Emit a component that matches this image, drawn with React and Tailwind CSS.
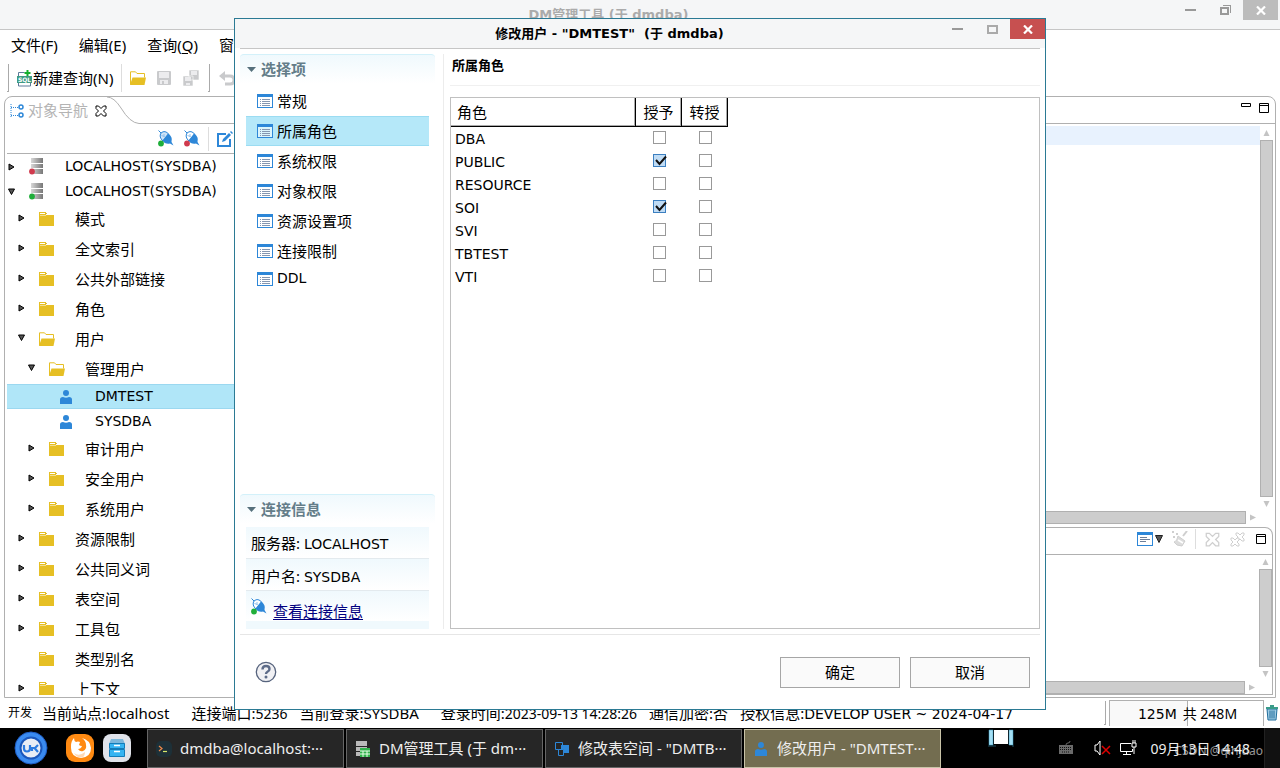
import { useState } from "react";

const treeRows = [
  { level: 0, kind: 'server', dot: '#d03a4d', arrow: 'right', text: 'LOCALHOST(SYSDBA)' },
  { level: 0, kind: 'server', dot: '#1fae3a', arrow: 'down', text: 'LOCALHOST(SYSDBA)' },
  { level: 1, kind: 'folder', arrow: 'right', text: '模式' },
  { level: 1, kind: 'folder', arrow: 'right', text: '全文索引' },
  { level: 1, kind: 'folder', arrow: 'right', text: '公共外部链接' },
  { level: 1, kind: 'folder', arrow: 'right', text: '角色' },
  { level: 1, kind: 'open', arrow: 'down', text: '用户' },
  { level: 2, kind: 'open', arrow: 'down', text: '管理用户' },
  { level: 3, kind: 'user', text: 'DMTEST', selected: true },
  { level: 3, kind: 'user', text: 'SYSDBA' },
  { level: 2, kind: 'folder', arrow: 'right', text: '审计用户' },
  { level: 2, kind: 'folder', arrow: 'right', text: '安全用户' },
  { level: 2, kind: 'folder', arrow: 'right', text: '系统用户' },
  { level: 1, kind: 'folder', arrow: 'right', text: '资源限制' },
  { level: 1, kind: 'folder', arrow: 'right', text: '公共同义词' },
  { level: 1, kind: 'folder', arrow: 'right', text: '表空间' },
  { level: 1, kind: 'folder', arrow: 'right', text: '工具包' },
  { level: 1, kind: 'folder', text: '类型别名' },
  { level: 1, kind: 'folder', arrow: 'right', text: '上下文' },
];

const levelPadding = ['pl-0', 'pl-[10px]', 'pl-[20px]', 'pl-[30px]'];

const pages = ['常规', '所属角色', '系统权限', '对象权限', '资源设置项', '连接限制', 'DDL'];

const initialRoles = [
  { name: 'DBA', granted: false, admin: false },
  { name: 'PUBLIC', granted: true, admin: false },
  { name: 'RESOURCE', granted: false, admin: false },
  { name: 'SOI', granted: true, admin: false },
  { name: 'SVI', granted: false, admin: false },
  { name: 'TBTEST', granted: false, admin: false },
  { name: 'VTI', granted: false, admin: false },
];

const isLatin = (text) => /^[\x20-\x7e]+$/.test(text);

/* ---------- icons ---------- */

const FolderIcon = () => (
  <svg width="15" height="14" viewBox="0 0 15 14" shapeRendering="crispEdges">
    <path d="M0 0h7v1h1v1h7v12H0z" fill="#e6bf24" />
    <path d="M1 1h5v1H1zM7 2h8v1H7z" fill="#fff" />
    <path d="M1 3h6v1H1z" fill="#f3df91" />
  </svg>
);

const OpenFolderIcon = () => (
  <svg width="17" height="15" viewBox="0 0 17 15">
    <path d="M.5 13.5V.8h5l1.500 1.700h7.500v4" fill="#fff" stroke="#e6bf24" />
    <path d="M2.500 6.500H16l-1.500 7.500H0z" fill="#e6bf24" />
  </svg>
);

const ServerIcon = ({ dot }) => (
  <svg width="16" height="17" viewBox="0 0 16 17">
    <defs>
      <linearGradient id="bar">
        <stop offset="0" stopColor="#d8d8d8" />
        <stop offset="1" stopColor="#777" />
      </linearGradient>
    </defs>
    <path d="M2 0h12v5H2zM2 6h12v4H2zM2 11h12v5H2z" fill="url(#bar)" />
    <circle cx="3" cy="13.500" r="2.900" fill={dot} />
  </svg>
);

const UserIcon = ({ size = 14 }) => (
  <svg width={size} height={size} viewBox="0 0 14 14">
    <circle cx="7" cy="3" r="3" fill="#2d87d8" />
    <path d="M1 14V9.500Q1 7 4 7q3 1.500 6 0 3 0 3 2.500V14z" fill="#2d87d8" />
  </svg>
);

const PlugIcon = ({ dot, solid }) => (
  <svg width="16" height="17" viewBox="0 0 16 17">
    <path d="M.5.5l3 3" stroke="#2d87d8" />
    <path d="M3 3q4-3.500 8 1.500L5 11Q.5 7 3 3z" fill={solid ? '#cfe4f7' : '#fff'} stroke="#2d87d8" />
    <path d="M6 4v3M3.500 5.500l3 1" stroke="#8fc0ec" />
    <path d="M10 3.500q5 3 3.500 8.500l2 3.500-3.500-2q-5 1-7.500-3z" fill="#2d87d8" />
    <circle cx="3" cy="13.500" r="2.900" fill={dot} />
  </svg>
);

const PageIcon = () => (
  <svg width="16" height="14" viewBox="0 0 16 14" shapeRendering="crispEdges">
    <path d="M.5.5h15v13H.5z" fill="#fff" fillOpacity=".5" stroke="#2d87d8" />
    <path d="M0 0h16v3H0z" fill="#2d87d8" />
    <path d="M3 5h1M3 7h1M3 9h1M3 11h1M5 5h8M5 7h8M5 9h8M5 11h8" transform="translate(0 .5)" stroke="#8496b0" />
  </svg>
);

const SqlIcon = () => (
  <svg width="16" height="17" viewBox="0 0 16 17">
    <path d="M1.500 6V2.500h6M1.500 13v3h12v-3" fill="none" stroke="#5d7a99" />
    <rect y="6" width="15" height="7" fill="#3f9b84" />
    <text x="7.500" y="12" fontSize="6" fontWeight="700" fontFamily="DejaVu Sans" textAnchor="middle" fill="#fff">SQL</text>
    <path d="M10.500 0v6M7.500 3h6" stroke="#14b02c" strokeWidth="2" />
  </svg>
);

const SaveIcon = ({ size = 14 }) => (
  <svg width={size} height={size} viewBox="0 0 14 14">
    <path d="M0 1q0-1 1-1h12q1 0 1 1v12q0 1-1 1H1q-1 0-1-1z" fill="#c9cacc" />
    <path d="M2 1h10v6H2zM3 9h8v4H3z" fill="#ececee" />
    <path d="M5 10h2v3H5z" fill="#c9cacc" />
  </svg>
);

const SaveAllIcon = () => (
  <svg width="16" height="16" viewBox="0 0 16 16">
    <path d="M6 0h10v10H6zM0 6h10v10H0z" fill="#c9cacc" stroke="#fff" strokeWidth=".6" />
    <path d="M8 1h6v4H8zM2 7h6v4H2zM3 13h4v2H3z" fill="#ececee" />
  </svg>
);

const UndoIcon = () => (
  <svg width="17" height="15" viewBox="0 0 17 15">
    <path d="M3 5h8q4 0 4 4t-4 4H6" fill="none" stroke="#c9cacc" strokeWidth="3" />
    <path d="M0 5l6-5v10z" fill="#c9cacc" />
  </svg>
);

const NavIcon = () => (
  <svg width="14" height="16" viewBox="0 0 14 16">
    <path d="M1 1v13M1 4.500h7M1 12.500h7" stroke="#2d87d8" strokeDasharray="1 1" fill="none" />
    <circle cx="11" cy="4" r="2" fill="#fff" stroke="#2d87d8" strokeWidth="1.500" />
    <circle cx="11" cy="12" r="2" fill="#fff" stroke="#2d87d8" strokeWidth="1.500" />
  </svg>
);

const CrossOutline = ({ color = '#000', size = 12 }) => (
  <svg width={size} height={size} viewBox="0 0 12 12">
    <path d="M1 1h2.500L6 3.500 8.500 1H11v2.500L8.500 6 11 8.500V11H8.500L6 8.500 3.500 11H1V8.500L3.500 6 1 3.500z" fill="#fff" stroke={color} />
  </svg>
);

const EditIcon = () => (
  <svg width="16" height="16" viewBox="0 0 16 16">
    <path d="M9 3H1v12h12V8" fill="none" stroke="#2d87d8" strokeWidth="2" />
    <path d="M5 11l1-3 6-6 2 2-6 6zM13 1l1-1 2 2-1 1z" fill="#2d87d8" />
  </svg>
);

const TreeArrow = ({ dir }) => (
  <svg width="9" height="8" viewBox="0 0 9 8">
    {dir === 'right' && <path d="M2 1v6l5-3z" fill="#555" stroke="#000" />}
    {dir === 'down' && <path d="M1.500 1h6l-3 5.500z" fill="#555" stroke="#000" />}
  </svg>
);

const MinimizeBox = () => (
  <svg width="10" height="10" viewBox="0 0 10 10"><path d="M.5.5h9v3h-9z" fill="#fff" stroke="#000" /></svg>
);

const MaximizeBox = () => (
  <svg width="10" height="10" viewBox="0 0 10 10"><path d="M.5.5h9v9h-9zM0 2.500h10" fill="#fff" stroke="#000" /></svg>
);

const ConsoleIcon = () => (
  <svg width="16" height="14" viewBox="0 0 16 14" shapeRendering="crispEdges">
    <path d="M.5.5h15v13H.5z" fill="#fff" stroke="#2d87d8" />
    <path d="M0 0h16v3H0z" fill="#2d87d8" />
    <path d="M3 5.500h7M3 7.500h10M3 9.500h6" stroke="#6d7f99" />
  </svg>
);

const BroomIcon = () => (
  <svg width="17" height="16" viewBox="0 0 17 16">
    <path d="M16 0l-4 5" stroke="#cfcfcf" strokeWidth="2" />
    <path d="M7 5l7 5-3 5q-6 0-8-4 3 0 4-6z" fill="#dcdcdc" stroke="#cfcfcf" />
    <path d="M7 9l5 3" stroke="#fff" strokeWidth="1.500" />
    <path d="M1 0h2v2H1zM5 2h2v2H5zM2 5h2v2H2z" fill="#cfcfcf" />
  </svg>
);

const RemoveAllIcon = () => (
  <svg width="16" height="15" viewBox="0 0 16 15">
    <path d="M6 1h2l2 2 2-2h2v2l-2 2 2 2v2h-2l-2-2-2 2H6V7l2-2-2-2z" fill="#fff" stroke="#cfcfcf" />
    <path d="M1 6h2l2 2 2-2h2v2l-2 2 2 2v2H7l-2-2-2 2H1v-2l2-2-2-2z" fill="#fff" stroke="#cfcfcf" />
  </svg>
);

const TrashIcon = () => (
  <svg width="12" height="16" viewBox="0 0 12 16">
    <path d="M1 4h10l-1 11H2z" fill="#9fcbe3" stroke="#1f6d9c" />
    <path d="M4 5.500v8M6 5.500v8M8 5.500v8" stroke="#1f6d9c" />
    <path d="M0 2h12v2H0zM4 0h4v2H4z" fill="#3a9c8a" />
  </svg>
);

/* ---------- shared parts ---------- */

const WindowBar = ({ title, active }) => (
  <header className="flex h-[29px] shrink-0 bg-[#f5f6f7]">
    <h1 className={`flex-1 whitespace-pre pl-[44px] text-center font-["DejaVu_Sans","Noto_Sans_CJK_SC",sans-serif] text-[13px] font-bold leading-[30px] ${active ? 'text-black' : 'text-[#ababab]'}`}>
      {title}
    </h1>
    <button aria-label="最小化" className="flex h-5 w-[35px] items-center justify-center">
      <span className="h-[2px] w-[11px] bg-[#999]" />
    </button>
    <button aria-label="最大化" className="flex h-5 w-[35px] items-center justify-center">
      {active ? (
        <span className="h-[9px] w-[11px] border-2 border-[#aaa]" />
      ) : (
        <svg width="11" height="10" viewBox="0 0 11 10" shapeRendering="crispEdges">
          <path d="M1 3h7v6H1z" fill="none" stroke="#999" strokeWidth="2" />
          <path d="M3 .5h7.500V8" fill="none" stroke="#999" />
        </svg>
      )}
    </button>
    <button aria-label="关闭" className={`flex h-5 w-[35px] items-center justify-center ${active ? 'bg-[#c75050]' : 'bg-[#bcbcbc]'}`}>
      <svg width="10" height="9" viewBox="0 0 10 9">
        <path d="M1 .5l8 8M9 .5l-8 8" stroke="#fff" strokeWidth="2.200" />
      </svg>
    </button>
  </header>
);

const VScroll = () => (
  <div className="flex w-[13px] shrink-0 flex-col items-center">
    <svg width="7" height="14" viewBox="0 0 7 14"><path d="M.5 10l3-6 3 6z" fill="#c4c4c4" /></svg>
    <div className="w-full flex-1 border border-[#b0b0b0] bg-[#cdcdcd]" />
    <svg width="7" height="14" viewBox="0 0 7 14"><path d="M.5 4l3 6 3-6z" fill="#c4c4c4" /></svg>
  </div>
);

const HScroll = () => (
  <div className="flex h-[13px] shrink-0 items-center pr-[13px]">
    <div className="h-full flex-1 border border-[#b0b0b0] bg-[#cdcdcd]" />
    <svg width="14" height="7" viewBox="0 0 14 7"><path d="M4 .5l6 3-6 3z" fill="#c4c4c4" /></svg>
  </div>
);

const CheckBox = ({ label, checked, onChange }) => (
  <span className="relative mx-auto block size-[13px]">
    <input
      type="checkbox"
      aria-label={label}
      checked={checked}
      onChange={onChange}
      className="block size-[13px] appearance-none border border-[#999] bg-white checked:border-[#3c7fc0] checked:bg-[#c0dcf5]"
    />
    {checked && (
      <svg className="pointer-events-none absolute left-px top-0" width="13" height="13" viewBox="0 0 13 13">
        <path d="M2 6l3.500 4L12 2.500" fill="none" stroke="#111" strokeWidth="2" />
      </svg>
    )}
  </span>
);

/* ---------- main window ---------- */

const MenuBar = () => (
  <nav className="flex h-[30px] shrink-0 items-center gap-[21px] pl-[11px] leading-[30px]">
    <button>文件(F)</button>
    <button>编辑(E)</button>
    <button>查询(<span className="underline underline-offset-2">Q</span>)</button>
    <button>窗口(W)</button>
  </nav>
);

const ToolBar = () => (
  <div className="flex h-[36px] shrink-0 items-center pl-[7px]">
    <span className="mr-2 h-7 w-[2px] border-b border-r border-[#aaa]" />
    <button className="flex items-center"><SqlIcon />新建查询(N)</button>
    <span className="mx-2 h-7 w-px bg-[#ddd]" />
    <button aria-label="打开"><OpenFolderIcon /></button>
    <button aria-label="保存" className="ml-[10px]"><SaveIcon /></button>
    <button aria-label="全部保存" className="ml-3"><SaveAllIcon /></button>
    <span className="mx-[9px] h-7 w-[2px] border-b border-r border-[#aaa]" />
    <button aria-label="撤销"><UndoIcon /></button>
  </div>
);

const TreeRow = ({ row }) => {
  const latin = isLatin(row.text);
  return (
    <li
      className={`flex shrink-0 items-center ${latin ? 'h-[25px] font-["DejaVu_Sans"] text-[14px]' : 'h-[30px]'} ${levelPadding[row.level]} ${row.selected ? 'border-y border-[#9bd8f0] bg-[#b0e6f8]' : ''}`}
    >
      <span className={`w-[20px] shrink-0 ${latin ? '' : 'pb-[3px]'}`}><TreeArrow dir={row.arrow} /></span>
      <span className="flex w-[38px] shrink-0 pl-[2px]">
        {row.kind === 'server' && <ServerIcon dot={row.dot} />}
        {row.kind === 'folder' && <FolderIcon />}
        {row.kind === 'open' && <OpenFolderIcon />}
        {row.kind === 'user' && <UserIcon />}
      </span>
      {row.text}
    </li>
  );
};

const ObjectTree = () => (
  <aside className="flex w-[320px] shrink-0 flex-col rounded-tl-lg border border-[#b0b0b0]">
    <div className="flex h-[27px] shrink-0">
      <div className="flex items-center pl-[5px] text-[#b4b4b4]">
        <NavIcon />
        <span className="ml-[4px] mr-[7px]">对象导航</span>
        <button aria-label="关闭"><CrossOutline /></button>
      </div>
      <svg width="32" height="27" viewBox="0 0 32 27">
        <path d="M0 0q7 0 14 11 9 15 18 15.500" fill="none" stroke="#b0b0b0" />
      </svg>
      <div className="flex-1 border-b border-[#b0b0b0]" />
    </div>
    <div className="ml-[2px] flex h-[30px] shrink-0 items-center gap-2 border-b border-[#b0b0b0] pl-[151px]">
      <button aria-label="连接" className="mr-[2px]"><PlugIcon dot="#1fae3a" solid /></button>
      <button aria-label="断开"><PlugIcon dot="#d03a4d" /></button>
      <span className="h-6 w-px bg-[#ddd]" />
      <button aria-label="编辑"><EditIcon /></button>
    </div>
    <ul className="mb-[2px] ml-[2px] flex min-h-0 flex-1 flex-col overflow-hidden">
      {treeRows.map((row, i) => (
        <TreeRow key={i} row={row} />
      ))}
    </ul>
  </aside>
);

const EditorArea = () => (
  <section className="flex min-w-0 flex-1 flex-col rounded-tr-lg border border-[#b0b0b0]">
    <div className="flex h-[27px] shrink-0 items-center justify-end gap-2 border-b border-[#b0b0b0] pb-[4px] pr-[6px]">
      <button aria-label="最小化"><MinimizeBox /></button>
      <button aria-label="最大化"><MaximizeBox /></button>
    </div>
    <div className="flex min-h-0 flex-1 flex-col pr-[2px] pt-[2px]">
      <div className="flex min-h-0 flex-1">
        <div className="flex-1"><div className="h-[19px] bg-[#e8f2fe]" /></div>
        <VScroll />
      </div>
      <HScroll />
    </div>
    <div className="mb-[2px] mr-[2px] mt-[3px] flex h-[168px] shrink-0 flex-col rounded-tr-lg border border-l-0 border-[#b0b0b0]">
      <div className="flex h-[27px] shrink-0 items-center justify-end border-b border-[#b0b0b0] pb-[4px] pr-[6px]">
        <button aria-label="显示控制台" className="flex items-center gap-[2px]">
          <ConsoleIcon />
          <svg width="8" height="8" viewBox="0 0 8 8"><path d="M.5.5h7L4 7.500z" fill="#555" stroke="#222" /></svg>
        </button>
        <button aria-label="清除" className="ml-2"><BroomIcon /></button>
        <span className="mx-[7px] h-5 w-px bg-[#ddd]" />
        <button aria-label="删除" className="ml-[2px]"><CrossOutline color="#cfcfcf" size={15} /></button>
        <button aria-label="全部删除" className="ml-[10px]"><RemoveAllIcon /></button>
        <button aria-label="最大化" className="ml-[10px]"><MaximizeBox /></button>
      </div>
      <div className="flex min-h-0 flex-1 justify-end"><VScroll /></div>
      <HScroll />
    </div>
  </section>
);

const StatusBar = () => (
  <footer className="flex h-[30px] shrink-0 items-center whitespace-nowrap leading-[30px]">
    <span className="ml-2 mr-[10px] text-[12px]">开发</span>
    <div className="flex flex-1 gap-3">
      <span className="mr-[10px]">当前站点:localhost</span>
      <span>连接端口:<span className="text-[14px]">5236</span></span>
      <span className="mr-[10px]">当前登录:SYSDBA</span>
      <span>登录时间:<span className="text-[14px]">2023-09-13 14:28:26</span></span>
      <span>通信加密:否</span>
      <span>授权信息:<span className='font-["DejaVu_Sans"] text-[14px]'>DEVELOP USER ~ 2024-04-17</span></span>
    </div>
    <span className="mr-[3px] h-6 w-[2px] border-b border-r border-[#aaa]" />
    <div className="flex h-[26px] w-[155px] items-center justify-center border border-b-0 border-[#b0b0b0] bg-[linear-gradient(90deg,#f9f9f9_77px,#b0b0b0_77px,#b0b0b0_78px,#fff_78px)] pl-[2px] text-[14px]">
      <span className='font-["DejaVu_Sans"]'>125M</span>
      <span className="ml-[6px]">共 248M</span>
    </div>
    <button aria-label="回收内存" className="mx-[2px]"><TrashIcon /></button>
  </footer>
);

/* ---------- dialog ---------- */

const SectionTitle = ({ children }) => (
  <h2 className="flex h-[30px] shrink-0 items-center rounded-t border-t border-[#d3f1fa] bg-linear-to-b from-[#f0f9fd] to-white pl-[7px] font-bold text-[#647d89]">
    <svg className="mr-[5px]" width="9" height="5" viewBox="0 0 9 5"><path d="M0 0h9L4.500 5z" fill="#56707c" /></svg>
    {children}
  </h2>
);

const UserDialog = () => {
  const [page, setPage] = useState('所属角色');
  const [roles, setRoles] = useState(initialRoles);

  const toggle = (name, field) => {
    setRoles(roles.map((r) => (r.name === name ? { ...r, [field]: !r[field] } : r)));
  };

  return (
    <div role="dialog" className="absolute bottom-[58px] left-[234px] right-[234px] top-[18px] flex flex-col border border-[#2b7a94] bg-white">
      <WindowBar title={'修改用户 - "DMTEST"  (于 dmdba)'} active />
      <div className="mx-[5px] flex min-h-0 flex-1 flex-col border-t border-[#c6c6c6] pt-[5px]">
        <div className="flex min-h-0 flex-1">
          <aside className="flex w-[195px] shrink-0 flex-col">
            <SectionTitle>选择项</SectionTitle>
            <ul className="mx-[6px] mt-[2px] flex-1">
              {pages.map((name) => (
                <li key={name}>
                  <button
                    onClick={() => setPage(name)}
                    className={`flex w-full items-center gap-1 pl-[11px] ${isLatin(name) ? 'h-[25px] font-["DejaVu_Sans"] text-[14px]' : 'h-[30px]'} ${name === page ? 'border-y border-[#9bdcf2] bg-[#b5e8f9]' : ''}`}
                  >
                    <PageIcon />
                    {name}
                  </button>
                </li>
              ))}
            </ul>
            <SectionTitle>连接信息</SectionTitle>
            <div className="mx-[6px] mt-[3px]">
              <p className="h-[32px] border-b border-[#e3eaee] bg-linear-to-b from-[#f0f9fd] to-white pl-[5px] leading-[33px]">
                服务器: <span className='font-["DejaVu_Sans"] text-[14px]'>LOCALHOST</span>
              </p>
              <p className="h-[32px] border-b border-[#e3eaee] bg-linear-to-b from-[#f0f9fd] to-white pl-[5px] leading-[34px]">
                用户名: <span className='font-["DejaVu_Sans"] text-[14px]'>SYSDBA</span>
              </p>
              <p className="flex h-[30px] bg-linear-to-b from-[#f0f9fd] to-white pl-[5px] leading-[40px]">
                <span className="mt-[7px]"><PlugIcon dot="#1fae3a" /></span>
                <a href="#info" className="ml-[6px] text-[#000080] underline underline-offset-2">查看连接信息</a>
              </p>
              <div className="h-2 bg-[#f0f9fd]" />
            </div>
          </aside>
          <main className="ml-[8px] flex min-w-0 flex-1 flex-col border-l border-[#ececec] pl-[6px]">
            <h2 className="h-[32px] border-b border-[#f0f0f0] pl-[2px] text-[13px] font-bold leading-[22px]">所属角色</h2>
            <div className="mt-[11px] min-h-0 flex-1 border border-[#c0c0c0]">
              <table className="w-[277px] table-fixed border-separate border-spacing-0 text-left">
                <thead>
                  <tr className="h-[29px]">
                    <th className="w-[185px] border-b border-r border-black p-0 pl-[6px] font-normal shadow-[inset_-1px_-1px_#aaa]">角色</th>
                    <th className="w-[46px] border-b border-r border-black p-0 text-center font-normal shadow-[inset_-1px_-1px_#aaa]">授予</th>
                    <th className="w-[46px] border-b border-r border-black p-0 text-center font-normal shadow-[inset_-1px_-1px_#aaa]">转授</th>
                  </tr>
                </thead>
                <tbody className='font-["DejaVu_Sans"] text-[14px] leading-[22px]'>
                  {roles.map((role) => (
                    <tr key={role.name} className="h-[23px]">
                      <td className="p-0 pl-[4px]">{role.name}</td>
                      <td className="p-0 pb-[2px]"><CheckBox label={`${role.name} 授予`} checked={role.granted} onChange={() => toggle(role.name, 'granted')} /></td>
                      <td className="p-0 pb-[2px]"><CheckBox label={`${role.name} 转授`} checked={role.admin} onChange={() => toggle(role.name, 'admin')} /></td>
                    </tr>
                  ))}
                </tbody>
              </table>
            </div>
          </main>
        </div>
        <div className="mt-[5px] flex h-[75px] shrink-0 items-center gap-[10px] border-t border-[#e6e6e6] px-[10px]">
          <button aria-label="帮助" className="ml-[5px] mr-auto">
            <svg width="22" height="22" viewBox="0 0 22 22">
              <circle cx="11" cy="11" r="9.700" fill="#f1f1f4" stroke="#56637d" strokeWidth="1.300" />
              <path d="M7.500 8.500q0-3.500 3.500-3.500t3.500 3q0 1.800-2 2.800-1.500.8-1.500 2.200" fill="none" stroke="#5d6b88" strokeWidth="2.400" />
              <circle cx="11" cy="16" r="1.500" fill="#5d6b88" />
            </svg>
          </button>
          <button className="h-[31px] w-[120px] border border-[#a6a6a6] bg-[#fafafa]">确定</button>
          <button className="h-[31px] w-[120px] border border-[#a6a6a6] bg-[#fafafa]">取消</button>
        </div>
      </div>
    </div>
  );
};

/* ---------- desktop taskbar ---------- */

const Task = ({ icon, children, active }) => (
  <button className={`flex h-full w-[197px] items-center gap-2 border pl-[8px] text-left text-[#eee] ${active ? 'border-[#c9c4a8] bg-[#736d50]' : 'border-[#666] bg-[#262626]'}`}>
    <span className="flex w-[16px] shrink-0 justify-center">{icon}</span>
    <span className="truncate">{children}</span>
  </button>
);

const TaskBar = () => (
  <footer className="flex h-10 shrink-0 items-center whitespace-nowrap bg-black text-[#eee]">
    <button aria-label="开始菜单" className="ml-[14px]">
      <svg width="34" height="34" viewBox="0 0 34 34">
        <circle cx="17" cy="17" r="16" fill="#3a8bf0" stroke="#1c5bc4" />
        <circle cx="17" cy="17" r="10.500" fill="#e9edf5" stroke="#1b57bb" strokeWidth="2" />
        <path d="M10 14v3.500q0 3 3 3t3-3V14M18 20v-3h3l3-3M20.500 17l3.500 4" fill="none" stroke="#2c7be0" strokeWidth="2.200" />
      </svg>
    </button>
    <button aria-label="Firefox" className="ml-[18px]">
      <svg width="28" height="28" viewBox="0 0 28 28">
        <rect width="28" height="28" rx="9" fill="#ff8a12" />
        <path d="M5 12q0-5 3-8 0 3 2 4 2-1 4 0l-1 3q1 1 3 1-1 3-4 3 2 3 5 2 4-2 3-6 0-4-4-7 8 2 9 10 0 9-10 10Q5 23 5 14z" fill="#fff" />
        <path d="M8 19q5 4 11-1 0 6-5 5.500-4-.5-6-4.500z" fill="#ffd9b5" />
      </svg>
    </button>
    <button aria-label="文件管理器" className="ml-[9px] mr-[16px]">
      <svg width="28" height="28" viewBox="0 0 28 28">
        <rect width="28" height="28" rx="8" fill="#e0e3ea" />
        <path d="M8 5h12l2 5H6z" fill="#7cb8dc" />
        <path d="M6.500 9.500h15v5h-15zM6.500 15.500h15v7h-15z" fill="#35b4f2" stroke="#137cb8" />
        <path d="M11 11.500h6M11 17.500h6" stroke="#fff" strokeWidth="1.500" />
      </svg>
    </button>
    <div className="flex h-[39px] flex-1 gap-[2px] self-end">
      <Task
        icon={
          <svg width="16" height="16" viewBox="0 0 16 16">
            <rect width="16" height="16" rx="5" fill="#1d3038" />
            <path d="M3 5l3 2.500L3 10" fill="none" stroke="#f08a4b" strokeWidth="1.200" />
            <path d="M7 10.500h4" stroke="#d8e86a" strokeWidth="1.200" />
          </svg>
        }
      >
        dmdba@localhost:···
      </Task>
      <Task
        icon={
          <svg width="16" height="16" viewBox="0 0 16 16">
            <path d="M1 0h11v5H1zM1 6h11v4H1zM1 11h5v4H1z" fill="#b9b9b9" />
            <path d="M5 7h10v9H5z" fill="#2fb24a" />
            <path d="M5 10h10M5 13h10M8 10v6M12 10v6" stroke="#e8ffe8" />
          </svg>
        }
      >
        DM管理工具 (于 dm···
      </Task>
      <Task
        icon={
          <svg width="16" height="16" viewBox="0 0 16 16">
            <path d="M1.500 1.500h7v7h-7z" fill="none" stroke="#2d87d8" />
            <path d="M7 4h8v8H7z" fill="#2d87d8" />
            <path d="M4.500 8.500h5v6h-5z" fill="#262626" stroke="#2d87d8" />
          </svg>
        }
      >
        修改表空间 - "DMTB···
      </Task>
      <Task active icon={<UserIcon />}>修改用户 - "DMTEST···</Task>
    </div>
    <svg className="mr-[45px] self-start" width="26" height="19" viewBox="0 0 26 19">
      <path d="M6 2h14v14H6z" fill="#fff" />
      <path d="M1 2h4v15H1zM21 2h4v15h-4zM0 18h8M24 18h2" fill="#a5e0f5" stroke="#3f9cc0" strokeWidth=".5" />
    </svg>
    <svg className="mr-[21px]" width="14" height="14" viewBox="0 0 14 14">
      <path d="M0 4h14v9H0z" fill="#6a6a6a" />
      <path d="M1 6.500h12M1 8.500h12M3 11h8" stroke="#111" strokeDasharray="1 1" />
      <path d="M7 4q0-2 2-2t2-2" fill="none" stroke="#6a6a6a" />
    </svg>
    <svg className="mr-[9px]" width="17" height="16" viewBox="0 0 17 16">
      <path d="M1 5h2l3-4v14l-3-4H1z" fill="none" stroke="#fff" />
      <path d="M8 6l8 8M16 6l-8 8" stroke="#e00000" strokeWidth="1.500" />
    </svg>
    <svg className="mr-[14px]" width="17" height="16" viewBox="0 0 17 16">
      <path d="M11 3.500H.5v8h12V9M6.500 11.500v3M3 14.500h8M12 3h4v4h-4zM13 3V0M15 3V0M14 7v7" fill="none" stroke="#fff" />
    </svg>
    <time className="relative mr-[14px] text-[14px]">
      09月13日 14:48
      <span className="absolute left-6 top-[5px] text-[12px] leading-[16px] text-white/60">CSDN @qinjuao</span>
    </time>
    <div className="h-full w-4 border-l border-[#222] bg-[#111]" />
  </footer>
);

const App = () => {
  return (
    <div className='relative flex h-screen min-h-[600px] flex-col overflow-hidden bg-white font-["Noto_Sans","Noto_Sans_CJK_SC",sans-serif] text-[15px] text-black'>
      <div className="shrink-0 border-b border-[#c6c6c6] bg-[#f5f6f7] pr-[2px]">
        <WindowBar title="DM管理工具 (于 dmdba)" />
      </div>
      <MenuBar />
      <ToolBar />
      <div className="flex min-h-0 flex-1 px-1">
        <ObjectTree />
        <EditorArea />
      </div>
      <StatusBar />
      <TaskBar />
      <UserDialog />
    </div>
  );
};

export default App;
